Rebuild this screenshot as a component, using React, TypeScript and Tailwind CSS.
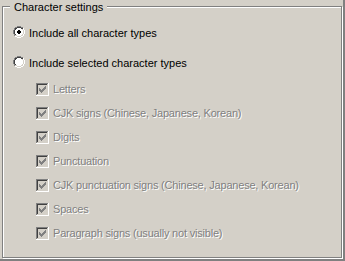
import React from "react";

const RADIO_ROWS = [
  "....GGGG....",
  "..GGDDDDGG..",
  ".GDDWWWWDDH.",
  ".GDWWWWWWLH.",
  "GDWWWKKWWWLH",
  "GDWWKKKKWWLH",
  "GDWWKKKKWWLH",
  "GDWWWKKWWWLH",
  ".GDWWWWWWLH.",
  ".GLLWWWWLLH.",
  "..HHLLLLHH..",
  "....HHHH....",
];

const COLORS: Record<string, string> = {
  G: "#808080",
  D: "#404040",
  W: "#ffffff",
  L: "#d4d0c8",
  H: "#ffffff",
  K: "#000000",
};

function Radio({ checked }: { checked: boolean }) {
  const rects: React.ReactNode[] = [];
  RADIO_ROWS.forEach((row, y) => {
    row.split("").forEach((c, x) => {
      if (c === ".") return;
      let ch = c;
      if (ch === "K" && !checked) ch = "W";
      rects.push(<rect key={`${x}-${y}`} x={x} y={y} width={1} height={1} fill={COLORS[ch]} />);
    });
  });
  return (
    <svg width={12} height={12} viewBox="0 0 12 12" shapeRendering="crispEdges" className="shrink-0 block">
      {rects}
    </svg>
  );
}

function Check() {
  const cols = [2, 3, 4, 3, 2, 1, 0];
  return (
    <svg width={13} height={13} viewBox="0 0 13 13" shapeRendering="crispEdges" className="shrink-0 block">
      <rect x={0} y={0} width={12} height={1} fill="#808080" />
      <rect x={0} y={0} width={1} height={12} fill="#808080" />
      <rect x={0} y={12} width={13} height={1} fill="#ffffff" />
      <rect x={12} y={0} width={1} height={13} fill="#ffffff" />
      <rect x={1} y={1} width={10} height={1} fill="#404040" />
      <rect x={1} y={1} width={1} height={10} fill="#404040" />
      <rect x={1} y={11} width={11} height={1} fill="#d4d0c8" />
      <rect x={11} y={1} width={1} height={11} fill="#d4d0c8" />
      <rect x={2} y={2} width={9} height={9} fill="#d4d0c8" />
      {cols.map((r, i) => (
        <rect key={i} x={3 + i} y={3 + r} width={1} height={3} fill="#808080" />
      ))}
    </svg>
  );
}

const items = [
  "Letters",
  "CJK signs (Chinese, Japanese, Korean)",
  "Digits",
  "Punctuation",
  "CJK punctuation signs (Chinese, Japanese, Korean)",
  "Spaces",
  "Paragraph signs (usually not visible)",
];

export default function App() {
  return (
    <div className="w-[345px] h-[261px] bg-[#d4d0c8] border-r-2 border-b-2 border-[#808080] overflow-hidden font-['Liberation_Sans',Arial,sans-serif] text-[11px] leading-[13px] text-black">
      <div className="relative ml-[2px] mt-[6px] w-[340px] h-[252px] border border-[#808080] shadow-[inset_1px_1px_0_#fff,1px_1px_0_#fff]">
        <div className="absolute left-[7px] top-[-6px] px-[4px] bg-[#d4d0c8] whitespace-nowrap">Character settings</div>
        <div className="flex flex-col pl-[10px] pt-[19px]">
          <div className="flex items-start gap-[4px]">
            <Radio checked />
            <span className="mt-[1px] whitespace-nowrap">Include all character types</span>
          </div>
          <div className="flex items-start gap-[4px] mt-[16px]">
            <Radio checked={false} />
            <span className="mt-[1px] whitespace-nowrap">Include selected character types</span>
          </div>
          <div className="flex flex-col gap-[11px] ml-[23px] mt-[13px]">
            {items.map((t) => (
              <div key={t} className="flex items-start gap-[4px]">
                <Check />
                <span className="whitespace-nowrap tracking-[-0.2px] text-[#808080] [text-shadow:1px_1px_0_#fff]">{t}</span>
              </div>
            ))}
          </div>
        </div>
      </div>
    </div>
  );
}
